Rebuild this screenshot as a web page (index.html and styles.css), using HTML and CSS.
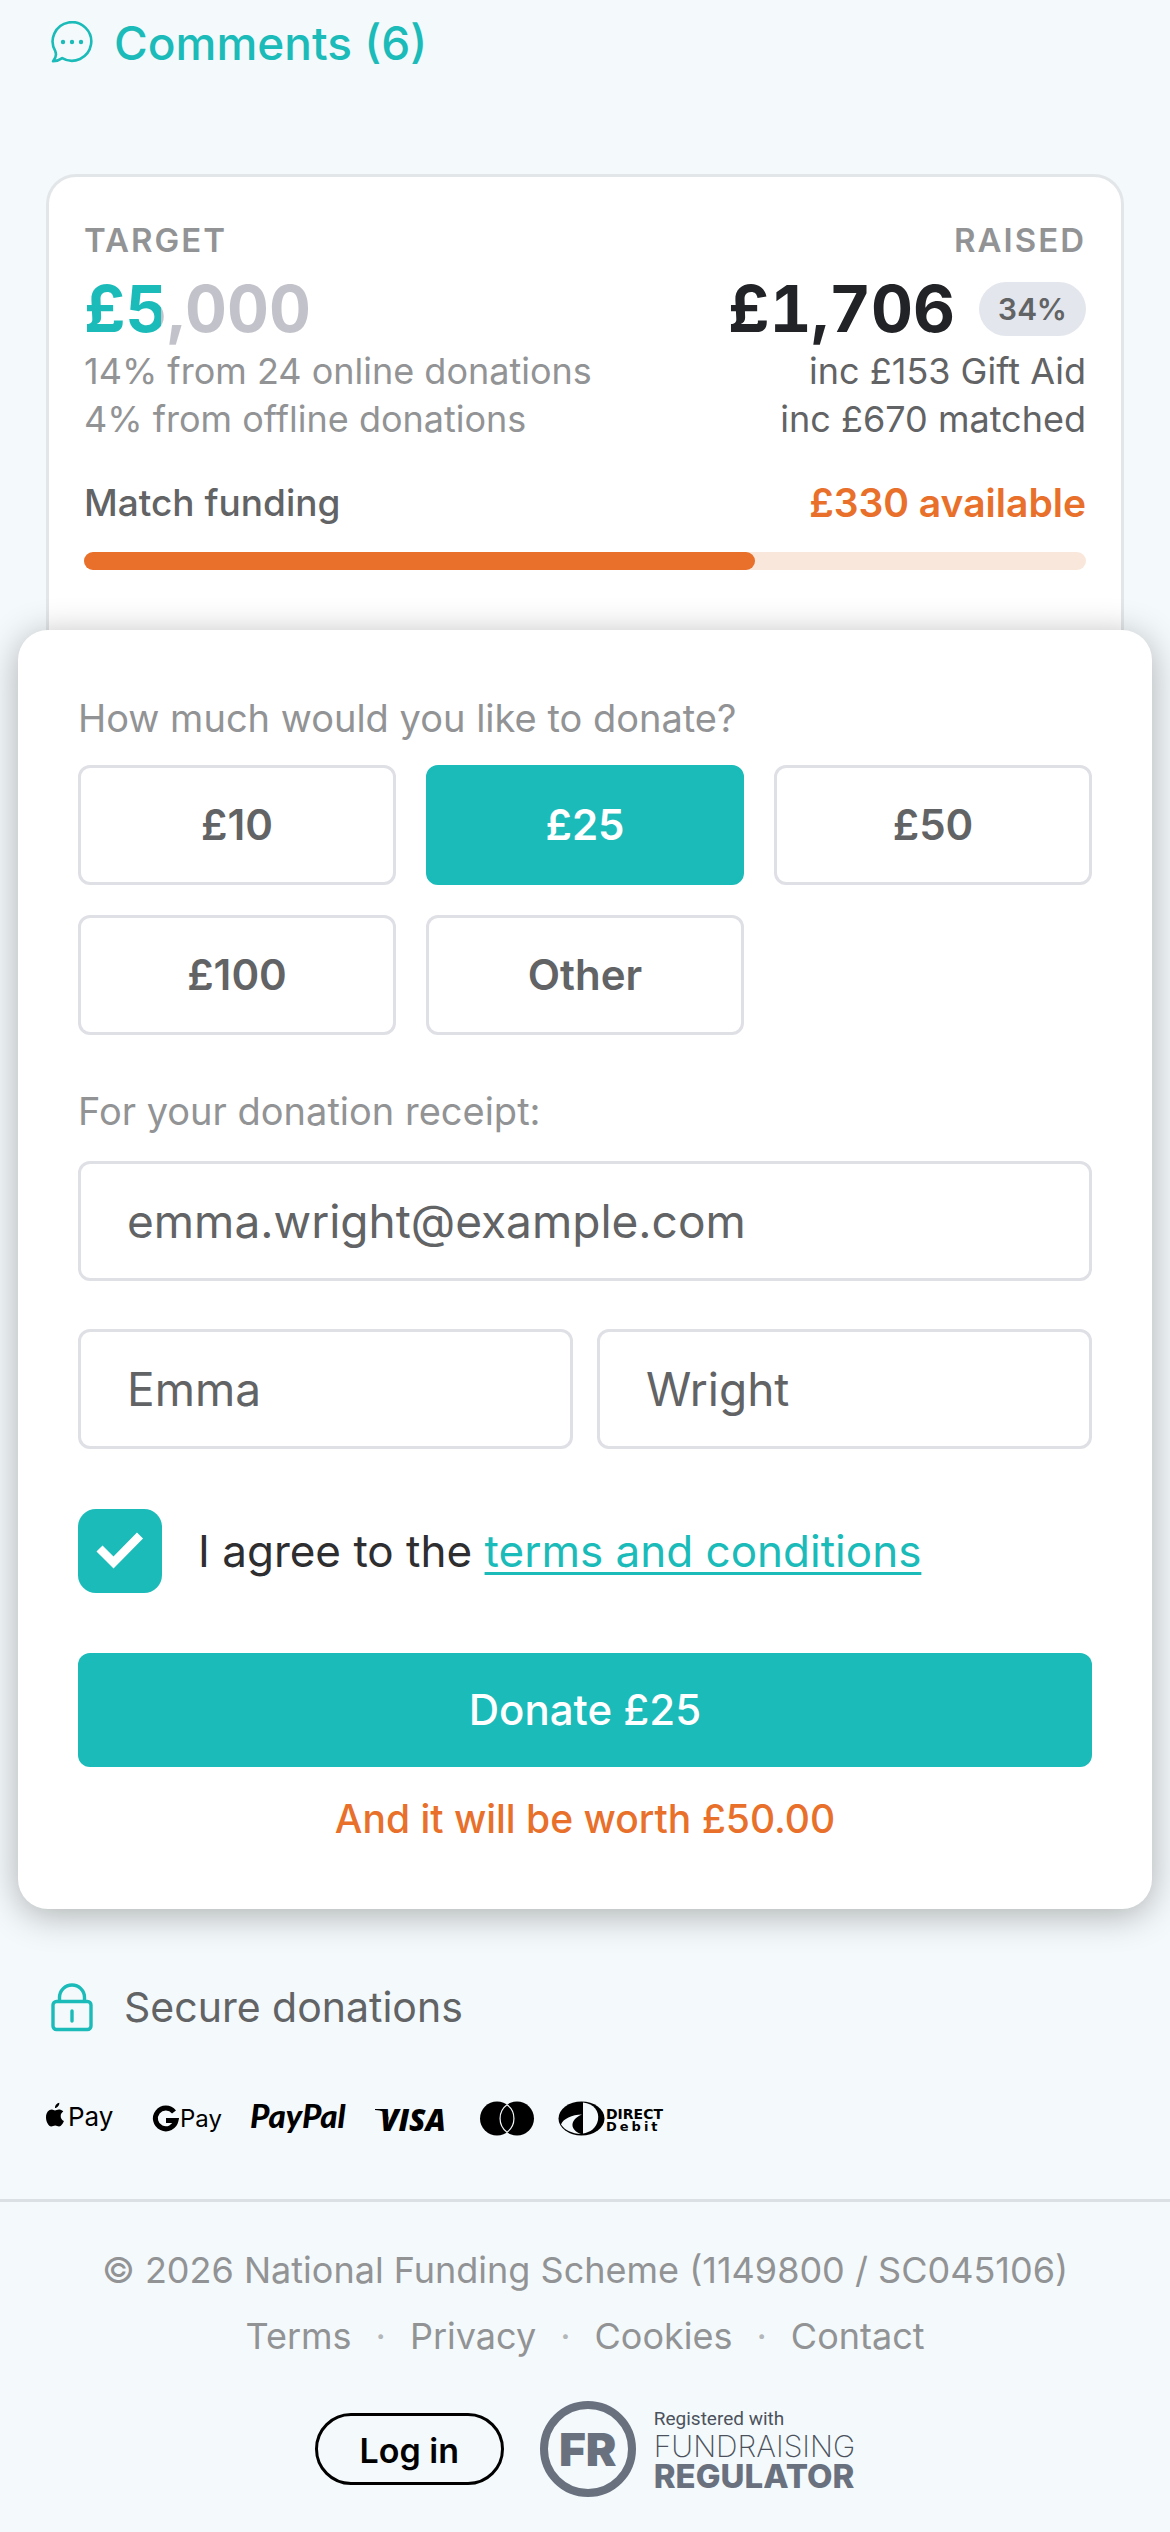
FILE: index.html
```html
<!DOCTYPE html>
<html lang="en">
<head>
<meta charset="utf-8">
<meta name="viewport" content="width=device-width, initial-scale=1">
<title>Donate</title>
<link rel="stylesheet" href="styles.css">
</head>
<body>
<main>
  <a class="comments" href="#comments">
    <svg class="icon" viewBox="0 0 44 44" aria-hidden="true">
      <path d="M5.300 30.200A19.300 19.300 0 1 1 12.200 37.100C9.500 39 6.500 40.200 3 40.300C5.500 37.500 7 34.500 5.300 30.200Z" fill="none" stroke="currentColor" stroke-width="2.600" stroke-linejoin="round"/>
      <g fill="currentColor"><circle cx="13" cy="21" r="2.200"/><circle cx="22" cy="21" r="2.200"/><circle cx="31" cy="21" r="2.200"/></g>
    </svg>
    <span>Comments (6)</span>
  </a>

  <section class="stats">
    <div class="totals">
      <div class="total">
        <h2 class="label">Target</h2>
        <div class="amount"><span class="target">£5,000</span></div>
        <p class="note">14% from 24 online donations</p>
        <p class="note">4% from offline donations</p>
      </div>
      <div class="total total-raised">
        <h2 class="label">Raised</h2>
        <div class="amount"><span>£1,706</span><span class="pill">34%</span></div>
        <p class="note">inc £153 Gift Aid</p>
        <p class="note">inc £670 matched</p>
      </div>
    </div>
    <div class="match">
      <span class="match-name">Match funding</span>
      <span class="match-left">£330 available</span>
    </div>
    <div class="bar"><div class="bar-fill" style="width: 67%"></div></div>
  </section>

  <form class="donate">
    <p class="question">How much would you like to donate?</p>
    <div class="choices">
      <button type="button" class="choice">£10</button>
      <button type="button" class="choice choice-on" aria-pressed="true">£25</button>
      <button type="button" class="choice">£50</button>
      <button type="button" class="choice">£100</button>
      <button type="button" class="choice">Other</button>
    </div>
    <label class="question receipt" for="email">For your donation receipt:</label>
    <input class="field" id="email" type="email" value="emma.wright@example.com">
    <div class="names">
      <input class="field" type="text" aria-label="First name" value="Emma">
      <input class="field" type="text" aria-label="Last name" value="Wright">
    </div>
    <div class="agree">
      <input class="tick" type="checkbox" id="agree" checked>
      <label for="agree">I agree to the <a href="#terms">terms and conditions</a></label>
    </div>
    <button type="submit" class="submit">Donate £25</button>
    <p class="worth">And it will be worth £50.00</p>
  </form>

  <section class="secure">
    <div class="secure-title">
      <svg class="lock" viewBox="0 0 44 50" aria-hidden="true">
        <g fill="none" stroke="currentColor" stroke-width="3.400" stroke-linecap="round">
          <rect x="3" y="19.500" width="38" height="28" rx="3.500"/>
          <path d="M9.500 19V15.500a12.500 12.500 0 0 1 25 0V19M22 29v10"/>
        </g>
      </svg>
      <span>Secure donations</span>
    </div>
    <div class="methods">
      <svg class="m-apple" viewBox="0 0 74 36" role="img" aria-label="Apple Pay">
        <path transform="translate(0 1.500)" d="M10 6.500c-.2-2.500 2-5 4.300-5.300.3 2.700-2 5.200-4.300 5.300ZM15.700 14.500c0-2.300 1.300-3.600 2.600-4.400-1.300-1.800-3.200-2.200-4.400-2.200-1.700 0-2.900 1-3.900 1S8.300 8 6.800 8C3.800 8 1 11 1 15.700c0 4.600 2.700 9.300 5.200 9.300 1.500 0 2.400-1 4-1s2.200 1 3.900 1c2.100 0 4-3.200 4.800-5.500-2-.8-3.200-2.700-3.200-5Z"/>
        <text x="23" y="26" font-size="26">Pay</text>
      </svg>
      <svg class="m-google" viewBox="0 0 74 36" role="img" aria-label="Google Pay">
        <path d="M23 12A10.400 10.400 0 1 0 25 20.500H15" fill="none" stroke="#000" stroke-width="5"/>
        <text x="29" y="27" font-size="24">Pay</text>
      </svg>
      <svg class="m-paypal" viewBox="0 0 102 36" role="img" aria-label="PayPal"><text class="lato" x="1" y="28" font-size="33">PayPal</text></svg>
      <svg class="m-visa" viewBox="0 0 76 36" role="img" aria-label="Visa"><path d="M0 9h11l4 14-3-8C10 11.500 7 10.500 0 10Z"/><text class="open" x="5" y="31" font-size="30">VISA</text></svg>
      <svg class="m-master" viewBox="0 0 56 36" role="img" aria-label="Mastercard">
        <circle cx="18" cy="18.500" r="17"/><circle cx="38" cy="18.500" r="17"/>
        <path d="M28 4.800a17 17 0 0 1 0 27.400a17 17 0 0 1 0-27.400Z" stroke="#f4f9fb" stroke-width="1.200"/>
      </svg>
      <svg class="m-debit" viewBox="0 0 110 36" role="img" aria-label="Direct Debit">
        <ellipse cx="24.500" cy="18.500" rx="23" ry="17"/>
        <path d="M26 2.500C37 4 42.500 11 41 20c-1.500 8-8 12.500-15 13.500Z" fill="#f4f9fb"/>
        <path d="M25 14.500C15 14.500 6 19 4 24.500C8 30.500 15 33.500 24 34C13 30 12 20 25 14.500Z" fill="#f4f9fb"/>
        <text class="dd" x="49" y="19" font-size="14">DIRECT</text>
        <text class="dd" x="49" y="31" font-size="13" letter-spacing="3">Debit</text>
      </svg>
    </div>
  </section>
</main>

<footer class="footer">
  <p class="legal">© 2026 National Funding Scheme (1149800 / SC045106)</p>
  <nav class="links">
    <a href="#terms">Terms</a><span>·</span><a href="#privacy">Privacy</a><span>·</span><a href="#cookies">Cookies</a><span>·</span><a href="#contact">Contact</a>
  </nav>
  <div class="badges">
    <button type="button" class="login">Log in</button>
    <a class="regulator" href="#regulator">
      <span class="seal">FR</span>
      <span class="reg-text">
        <span class="reg-small">Registered with</span>
        <span class="reg-thin">FUNDRAISING</span>
        <span class="reg-bold">REGULATOR</span>
      </span>
    </a>
  </div>
</footer>
</body>
</html>
```
FILE: styles.css
```css
:root {
  --teal: #1abbb9;
  --orange: #e8702a;
  --ink: #626365;
  --muted: #929395;
  --line: #dfdfe6;
  --page: #f4f9fb;
}

* { box-sizing: border-box; }

body {
  margin: 0;
  background: var(--page);
  color: var(--ink);
  font-family: Inter, "Liberation Sans", sans-serif;
  font-size: 36px;
  line-height: 48px;
}

p, h2 { margin: 0; }

button, input { font: inherit; color: inherit; }

.comments {
  display: flex;
  align-items: center;
  gap: 20px;
  height: 86px;
  margin-left: 50px;
  color: var(--teal);
  font-size: 46px;
  font-weight: 500;
  text-decoration: none;
}

.icon { width: 44px; height: 44px; }

.stats {
  margin: 88px 46px 0;
  padding: 38px 35px 60px;
  background: #fff;
  border: 3px solid #e3e6e9;
  border-bottom: 0;
  border-radius: 30px 30px 0 0;
}

.totals { display: flex; justify-content: space-between; }

.total { color: var(--muted); }

.total-raised { text-align: right; color: var(--ink); }

.label {
  color: var(--muted);
  font-size: 33px;
  line-height: 50px;
  font-weight: 600;
  letter-spacing: 2px;
  text-transform: uppercase;
}

.amount {
  display: flex;
  align-items: center;
  gap: 24px;
  height: 82px;
  padding-top: 6px;
  color: #212327;
  font-size: 65px;
  font-weight: 700;
  font-variant-numeric: tabular-nums;
}

.total-raised .amount { justify-content: flex-end; }

.target {
  background: linear-gradient(90deg, var(--teal) 34%, #c2c2cb 34%);
  -webkit-background-clip: text;
  background-clip: text;
  color: transparent;
  line-height: 76px;
}

.pill {
  padding: 0 19px;
  border-radius: 27px;
  background: #e3e6ec;
  color: var(--ink);
  font-size: 30px;
  line-height: 54px;
  font-weight: 600;
}

.match {
  display: flex;
  justify-content: space-between;
  margin-top: 36px;
  font-size: 37px;
  font-weight: 500;
}

.match-left { color: var(--orange); font-weight: 600; font-size: 39px; }

.bar {
  height: 18px;
  margin-top: 25px;
  border-radius: 9px;
  background: #fae7db;
}

.bar-fill { height: 100%; border-radius: 9px; background: var(--orange); }

.donate {
  position: relative;
  margin: 0 18px;
  padding: 64px 60px 66px;
  background: #fff;
  border-radius: 30px;
  box-shadow: 0 6px 36px rgba(0, 0, 0, 0.3);
}

.question { display: block; color: var(--muted); font-size: 38px; }

.choices {
  display: grid;
  grid-template-columns: repeat(3, 1fr);
  gap: 30px;
  margin-top: 23px;
}

.choice {
  height: 120px;
  border: 3px solid var(--line);
  border-radius: 12px;
  background: #fff;
  font-size: 42px;
  font-weight: 600;
}

.choice-on { border-color: var(--teal); background: var(--teal); color: #fff; }

.receipt { margin: 52px 0 26px; }

.field {
  width: 100%;
  min-width: 0;
  height: 120px;
  padding: 0 46px;
  border: 3px solid var(--line);
  border-radius: 12px;
  background: #fff;
  font-size: 46px;
}

.names { display: flex; gap: 24px; margin-top: 48px; }

.agree {
  display: flex;
  align-items: center;
  gap: 36px;
  margin: 60px 0;
  color: #2e2e30;
  font-size: 44px;
}

.agree a { color: var(--teal); text-decoration-thickness: 3px; text-underline-offset: 5px; }

.tick {
  appearance: none;
  flex: none;
  width: 84px;
  height: 84px;
  margin: 0;
  border: 3px solid var(--line);
  border-radius: 18px;
}

.tick:checked {
  border: 0;
  background: var(--teal) url("data:image/svg+xml,%3Csvg xmlns='http://www.w3.org/2000/svg' viewBox='0 0 84 84'%3E%3Cpath d='M21.500 39.500L35.500 53.500L62 26.500' fill='none' stroke='white' stroke-width='8.500'/%3E%3C/svg%3E");
}

.submit {
  display: block;
  width: 100%;
  height: 114px;
  border: 0;
  border-radius: 12px;
  background: var(--teal);
  color: #fff;
  font-size: 42px;
  font-weight: 500;
}

.worth {
  margin-top: 28px;
  color: var(--orange);
  font-size: 39px;
  font-weight: 500;
  text-align: center;
}

.secure { padding: 71px 45px 63px; }

.secure-title { display: flex; align-items: center; gap: 30px; height: 54px; padding-left: 5px; font-size: 41px; }

.lock { width: 44px; height: 50px; color: var(--teal); }

.methods { display: flex; align-items: center; height: 36px; margin-top: 66px; }

.methods svg { height: 36px; flex: none; overflow: visible; }

.methods text { font-family: Inter, sans-serif; fill: #000; }

.methods .lato { font-family: Lato, sans-serif; font-weight: 900; font-style: italic; }

.methods .open { font-family: "Open Sans", sans-serif; font-weight: 800; font-style: italic; }

.methods .dd { font-family: "DejaVu Sans", sans-serif; font-weight: 700; }

.m-apple { width: 74px; margin-right: 32px; }
.m-google { width: 74px; margin-right: 24px; }
.m-paypal { width: 102px; margin-right: 24px; }
.m-visa { width: 76px; margin-right: 28px; }
.m-master { width: 56px; margin-right: 22px; }
.m-debit { width: 110px; }

.footer {
  padding: 44px 24px 36px;
  border-top: 3px solid #dbe0e5;
  color: var(--muted);
  text-align: center;
}

.links { display: flex; justify-content: center; gap: 24px; margin-top: 18px; }

.links a { color: inherit; text-decoration: none; }

.links span { color: #b4b7b9; }

.badges { display: flex; align-items: center; justify-content: center; gap: 36px; margin-top: 41px; }

.login {
  width: 189px;
  height: 72px;
  padding: 4px 0 0;
  border: 3px solid #000;
  border-radius: 36px;
  background: none;
  color: #000;
  font-size: 34px;
  font-weight: 600;
}

.regulator { display: flex; align-items: center; gap: 18px; color: #69717f; text-decoration: none; }

.seal {
  width: 96px;
  height: 96px;
  border: 8px solid;
  border-radius: 50%;
  font-size: 46px;
  line-height: 80px;
  font-weight: 900;
}

.reg-text { display: flex; flex-direction: column; text-align: left; }

.reg-small { color: #4b525d; font: 19px/24px Roboto, sans-serif; }

.reg-thin { color: #4b525d; font-size: 30px; line-height: 30px; font-weight: 200; }

.reg-bold { font-size: 33px; line-height: 30px; font-weight: 800; }
```
